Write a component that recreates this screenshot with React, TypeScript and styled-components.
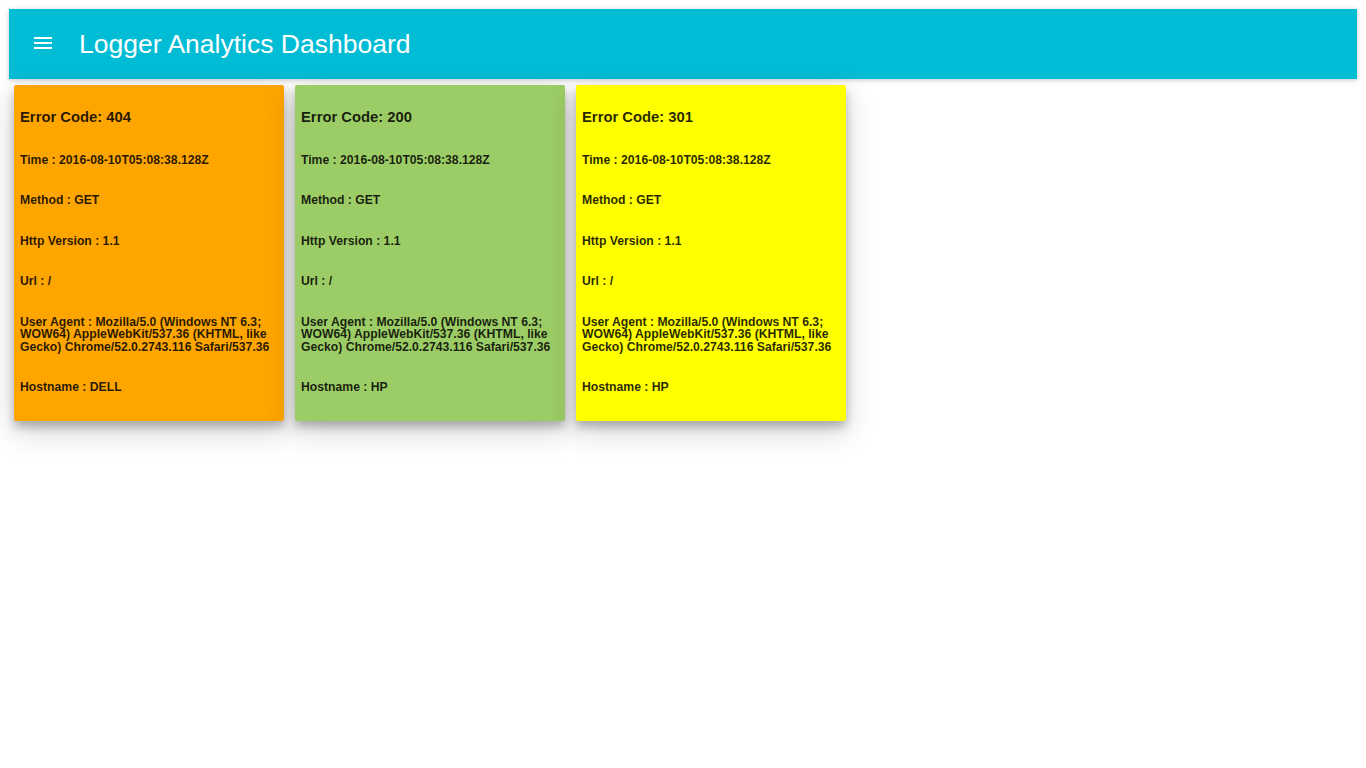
import React from "react";
import styled, { createGlobalStyle } from "styled-components";

const Global = createGlobalStyle`
  html, body { margin: 0; padding: 0; background: #fff; }
  body { font-family: "Liberation Sans", Arial, sans-serif; }
`;

const Page = styled.div`
  padding: 9px;
  min-height: 100vh;
  box-sizing: border-box;
`;

const AppBar = styled.header`
  height: 70px;
  background: #00bcd4;
  display: flex;
  align-items: center;
  padding-left: 22px;
  box-shadow: 0 1px 6px rgba(0, 0, 0, 0.12), 0 1px 4px rgba(0, 0, 0, 0.12);
`;

const MenuButton = styled.div`
  width: 24px;
  height: 24px;
  margin-top: -2px;
  display: flex;
`;

const Title = styled.h1`
  margin: -1px 0 0 24px;
  font-family: "Liberation Sans", Arial, sans-serif;
  font-weight: 400;
  font-size: 26.5px;
  color: #fff;
  line-height: 32px;
`;

const CardRow = styled.div`
  display: flex;
  gap: 11px;
  margin-top: 6px;
  padding-left: 5px;
`;

const Card = styled.div<{ $bg: string }>`
  width: 270px;
  box-sizing: border-box;
  background: ${(p) => p.$bg};
  border-radius: 2px;
  padding: 23px 5px 27px 6px;
  box-shadow: 0 10px 30px rgba(0, 0, 0, 0.19), 0 6px 10px rgba(0, 0, 0, 0.23);
  color: rgba(0, 0, 0, 0.85);
`;

const CardTitle = styled.div`
  font-size: 14.8px;
  font-weight: 700;
  line-height: 18px;
  margin-bottom: 27.5px;
`;

const Rows = styled.div`
  display: flex;
  flex-direction: column;
  gap: 28px;
`;

const Row = styled.div`
  font-size: 12.2px;
  font-weight: 700;
  line-height: 12.5px;
`;

const MenuIcon = () => (
  <svg width="24" height="24" viewBox="0 0 24 24" fill="#fff">
    <path d="M3 18h18v-2H3v2zm0-5h18v-2H3v2zm0-7v2h18V6H3z" />
  </svg>
);

const logs = [
  { code: 404, bg: "#ffa500", host: "DELL" },
  { code: 200, bg: "#9ccc65", host: "HP" },
  { code: 301, bg: "#ffff00", host: "HP" },
];

export default function App() {
  return (
    <>
      <Global />
      <Page>
        <AppBar>
          <MenuButton>
            <MenuIcon />
          </MenuButton>
          <Title>Logger Analytics Dashboard</Title>
        </AppBar>
        <CardRow>
          {logs.map((l) => (
            <Card key={l.code} $bg={l.bg}>
              <CardTitle>Error Code: {l.code}</CardTitle>
              <Rows>
                <Row>Time : 2016-08-10T05:08:38.128Z</Row>
                <Row>Method : GET</Row>
                <Row>Http Version : 1.1</Row>
                <Row>Url : /</Row>
                <Row>
                  User Agent : Mozilla/5.0 (Windows NT 6.3; WOW64) AppleWebKit/537.36 (KHTML, like Gecko) Chrome/52.0.2743.116 Safari/537.36
                </Row>
                <Row>Hostname : {l.host}</Row>
              </Rows>
            </Card>
          ))}
        </CardRow>
      </Page>
    </>
  );
}
